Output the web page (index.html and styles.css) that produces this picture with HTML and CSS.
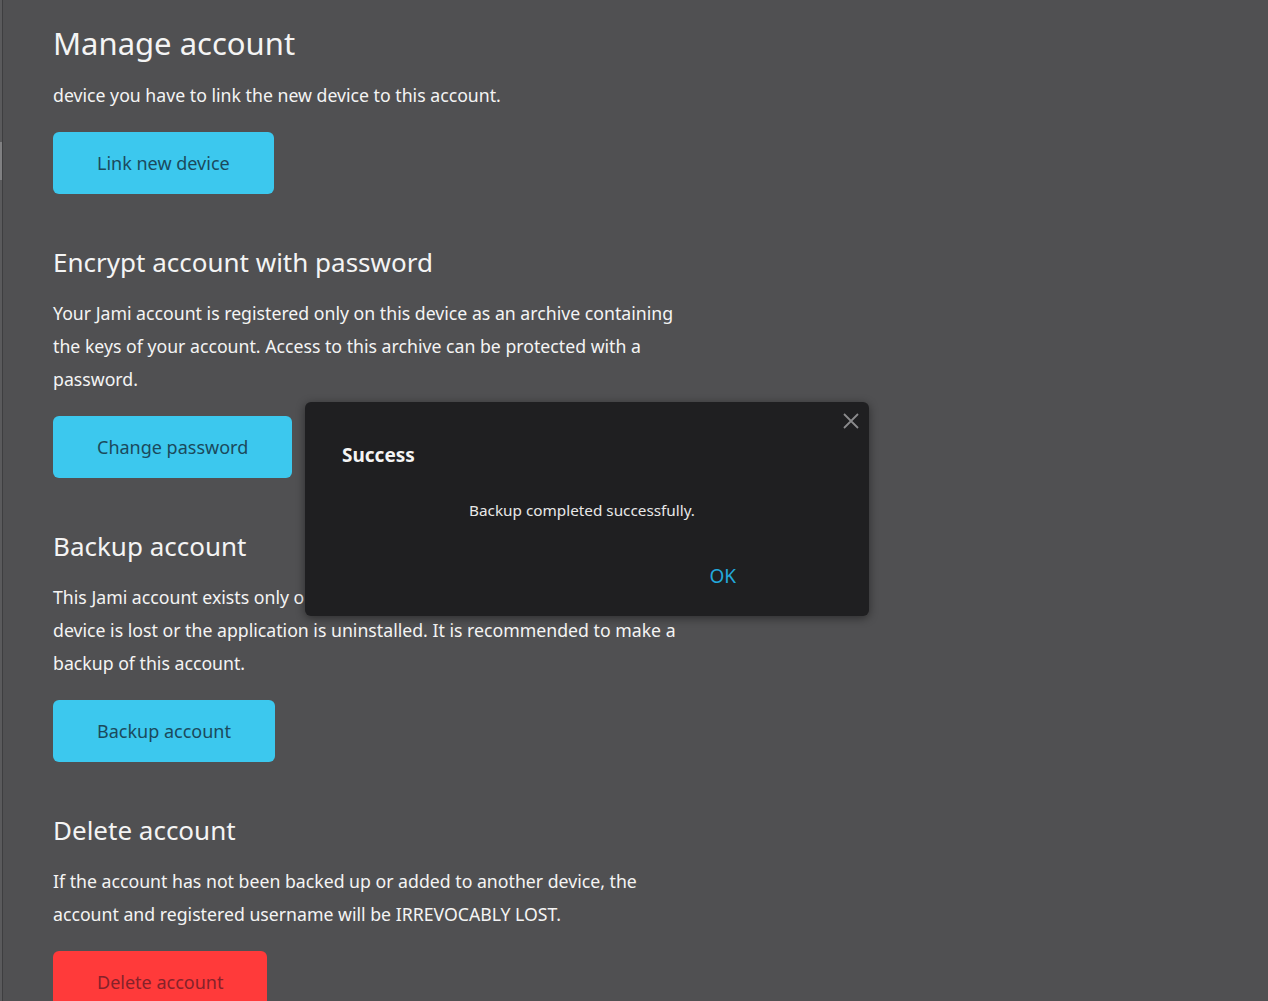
FILE: index.html
```html
<!DOCTYPE html>
<html lang="en">
<head>
    <meta charset="UTF-8">
    <title>Manage account</title>
    <link rel="stylesheet" href="styles.css">
</head>
<body>

<div class="page">
    <div class="edge">
        <div class="thumb"></div>
    </div>

    <div class="settings">
        <h1>Manage account</h1>
        <p>device you have to link the new device to this account.</p>
        <button class="btn">Link new device</button>

        <h2>Encrypt account with password</h2>
        <p>Your Jami account is registered only on this device as an archive containing<br>
            the keys of your account. Access to this archive can be protected with a<br>
            password.</p>
        <button class="btn">Change password</button>

        <h2>Backup account</h2>
        <p>This Jami account exists only on this device. The account will be lost if this<br>
            device is lost or the application is uninstalled. It is recommended to make a<br>
            backup of this account.</p>
        <button class="btn">Backup account</button>

        <h2>Delete account</h2>
        <p>If the account has not been backed up or added to another device, the<br>
            account and registered username will be IRREVOCABLY LOST.</p>
        <button class="btn danger">Delete account</button>
    </div>
</div>

<div class="dialog">
    <button class="close" aria-label="Close">
        <svg width="18" height="18" viewBox="0 0 18 18">
            <path d="M2 2 L16 16 M16 2 L2 16" stroke="#8a8a8c" stroke-width="1.8" fill="none"/>
        </svg>
    </button>
    <div class="dialog-title">Success</div>
    <div class="dialog-text">Backup completed successfully.</div>
    <div class="dialog-actions">
        <button class="ok">OK</button>
    </div>
</div>

</body>
</html>
```

FILE: styles.css
```css
body {
    margin: 0;
    background-color: #505052;
    color: #f4f4f4;
    font-family: "Noto Sans", "Open Sans", sans-serif;
    height: 1001px;
    overflow: hidden;
}
.page {
    display: flex;
    min-height: 1001px;
}
.edge {
    width: 2px;
    background-color: #5a5a5c;
    border-right: 1px solid #3e3e40;
}
.thumb {
    margin-top: 142px;
    height: 38px;
    background-color: #808082;
}
.settings {
    padding: 24px 0 0 50px;
    width: 720px;
}
h1, h2 {
    font-weight: 400;
    margin: 0;
}
h1 {
    font-size: 31px;
    line-height: 38px;
}
h2 {
    font-size: 26px;
    line-height: 36px;
    margin-top: 50px;
}
p {
    font-size: 17.7px;
    line-height: 33px;
    margin: 17px 0 20px;
}
.btn {
    display: block;
    height: 62px;
    padding: 0 44px;
    border: none;
    border-radius: 6px;
    background-color: #3cc8ee;
    color: #1b4a5c;
    font-family: inherit;
    font-size: 18px;
}
.danger {
    background-color: #ff3a3a;
    color: #85222a;
}
.dialog {
    position: absolute;
    left: 305px;
    top: 402px;
    width: 564px;
    height: 214px;
    box-sizing: border-box;
    padding: 38px 37px 0;
    background-color: #1f1f21;
    border-radius: 6px;
    box-shadow: 0 2px 10px rgba(0, 0, 0, 0.45);
}
.close {
    position: absolute;
    right: 9px;
    top: 10px;
    background: none;
    border: none;
    padding: 0;
    width: 18px;
    height: 18px;
}
.dialog-title {
    font-size: 19px;
    font-weight: 700;
    line-height: 30px;
}
.dialog-text {
    text-align: center;
    font-size: 15.3px;
    line-height: 22px;
    margin-top: 29px;
    padding-right: 10px;
    color: #e8e8e8;
}
.dialog-actions {
    display: flex;
    justify-content: flex-end;
    padding-right: 96px;
    margin-top: 42px;
}
.ok {
    background: none;
    border: none;
    padding: 0;
    color: #23a9dc;
    font-family: inherit;
    font-size: 19px;
}
```
